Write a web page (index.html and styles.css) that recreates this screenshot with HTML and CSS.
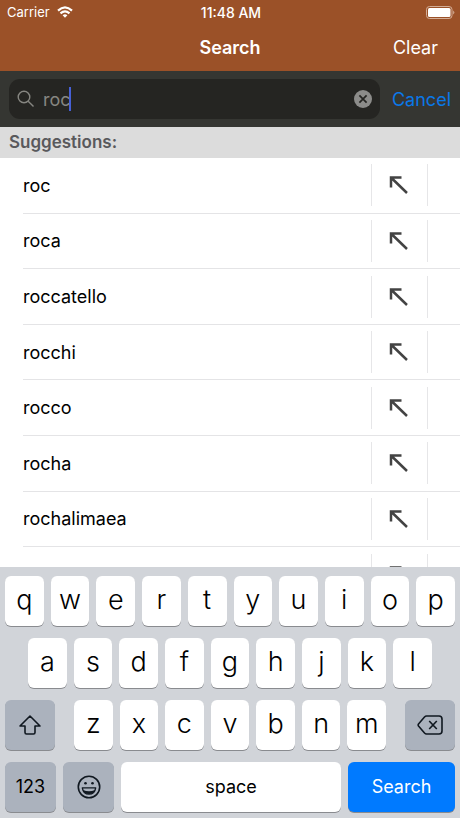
FILE: index.html
```html
<!DOCTYPE html>
<html lang="en">
<head>
<meta charset="utf-8">
<meta name="viewport" content="width=device-width, initial-scale=1">
<title>Search</title>
<link rel="stylesheet" href="styles.css">
</head>
<body>
<svg class="defs" aria-hidden="true">
  <symbol id="arrow" viewBox="0 0 20 20"><path d="M2 12.500V2.500H12.500M2.500 3L18 18" fill="none" stroke="currentColor" stroke-width="2.500"/></symbol>
</svg>
<div class="app">
  <header class="top">
    <div class="status">
      <span class="carrier">Carrier
        <svg class="wifi" viewBox="0 0 16 12" aria-hidden="true"><g fill="none" stroke="#fff" stroke-width="2.200"><path d="M1 4.600Q8 -1.800 15 4.600"/><path d="M3.500 7.400Q8 3.400 12.500 7.400"/></g><path d="M5.600 9.300Q8 7.300 10.400 9.300L8 11.700Z" fill="#fff"/></svg>
      </span>
      <time class="clock">11:48 AM</time>
      <svg class="battery" viewBox="0 0 29 13" aria-label="Battery full"><rect x=".5" y=".5" width="25.500" height="12" rx="3" fill="none" stroke="#d3ad96"/><rect x="2" y="2" width="22.500" height="9" rx="1.500" fill="#fff"/><path d="M27.200 4.500Q29.500 6.500 27.200 8.500Z" fill="#d3ad96"/></svg>
    </div>
    <nav class="nav">
      <h1 class="title">Search</h1>
      <button class="clear" type="button">Clear</button>
    </nav>
  </header>
  <form class="searchbar">
    <div class="field">
      <svg class="lens" viewBox="0 0 18 18" aria-hidden="true"><circle cx="7" cy="7" r="5.800"/><path d="M11.200 11.200L16.500 16.500"/></svg>
      <label class="query"><input class="input" type="text" value="roc" size="1" aria-label="Search"><span class="caret"></span></label>
      <button class="reset" type="button" aria-label="Clear text"><svg viewBox="0 0 18 18"><circle cx="9" cy="9" r="9" fill="#8c8c8a"/><path d="M5.400 5.400L12.600 12.600M12.600 5.400L5.400 12.600" stroke="#252522" stroke-width="1.700"/></svg></button>
    </div>
    <button class="cancel" type="button">Cancel</button>
  </form>
  <h2 class="heading">Suggestions:</h2>
  <ul class="list">
    <li class="row"><span class="word">roc</span><button class="fill" type="button" aria-label="Use roc"><svg><use href="#arrow"/></svg></button></li>
    <li class="row"><span class="word">roca</span><button class="fill" type="button" aria-label="Use roca"><svg><use href="#arrow"/></svg></button></li>
    <li class="row"><span class="word">roccatello</span><button class="fill" type="button" aria-label="Use roccatello"><svg><use href="#arrow"/></svg></button></li>
    <li class="row"><span class="word">rocchi</span><button class="fill" type="button" aria-label="Use rocchi"><svg><use href="#arrow"/></svg></button></li>
    <li class="row"><span class="word">rocco</span><button class="fill" type="button" aria-label="Use rocco"><svg><use href="#arrow"/></svg></button></li>
    <li class="row"><span class="word">rocha</span><button class="fill" type="button" aria-label="Use rocha"><svg><use href="#arrow"/></svg></button></li>
    <li class="row"><span class="word">rochalimaea</span><button class="fill" type="button" aria-label="Use rochalimaea"><svg><use href="#arrow"/></svg></button></li>
    <li class="row"><span class="word"></span><button class="fill" type="button" aria-label="Use suggestion"><svg><use href="#arrow"/></svg></button></li>
  </ul>
  <section class="keyboard" aria-label="Keyboard">
    <div class="keys">
      <button class="key">q</button><button class="key">w</button><button class="key">e</button><button class="key">r</button><button class="key">t</button><button class="key">y</button><button class="key">u</button><button class="key">i</button><button class="key">o</button><button class="key">p</button>
    </div>
    <div class="keys middle">
      <button class="key">a</button><button class="key">s</button><button class="key">d</button><button class="key">f</button><button class="key">g</button><button class="key">h</button><button class="key">j</button><button class="key">k</button><button class="key">l</button>
    </div>
    <div class="keys lower">
      <button class="key dark" aria-label="Shift"><svg class="shift" viewBox="0 0 24 22"><path d="M12 2L22 12H17V18.500Q17 20 15.500 20H8.500Q7 20 7 18.500V12H2Z"/></svg></button>
      <div class="keys letters">
        <button class="key">z</button><button class="key">x</button><button class="key">c</button><button class="key">v</button><button class="key">b</button><button class="key">n</button><button class="key">m</button>
      </div>
      <button class="key dark" aria-label="Delete"><svg class="delete" viewBox="0 0 26 20"><path d="M9.500 1H22Q25 1 25 4V16Q25 19 22 19H9.500Q8.500 19 7.500 18L1.500 11Q.8 10 1.500 9L7.500 2Q8.500 1 9.500 1ZM12.200 6L19.800 14M19.800 6L12.200 14"/></svg></button>
    </div>
    <div class="keys bottom">
      <button class="key dark label">123</button>
      <button class="key dark" aria-label="Emoji"><svg class="emoji" viewBox="0 0 24 24"><circle cx="12" cy="12" r="10.700"/><path d="M5.300 12.800H18.700Q17.700 19.200 12 19.200T5.300 12.800Z" stroke-width="1.300"/><path d="M6 15Q12 17.600 18 15Q16.500 19 12 19T6 15Z" fill="#101820" stroke="none"/><circle cx="8.500" cy="8.300" r="1.300" fill="#101820" stroke="none"/><circle cx="15.500" cy="8.300" r="1.300" fill="#101820" stroke="none"/></svg></button>
      <button class="key label">space</button>
      <button class="key label go">Search</button>
    </div>
  </section>
</div>
</body>
</html>
```
FILE: styles.css
```css
* { box-sizing: border-box; }

body {
  margin: 0;
  background: #fff;
  color: #000;
  font-family: Inter, "Liberation Sans", sans-serif;
  font-size: 18px;
}

h1, h2, ul { margin: 0; padding: 0; }

button {
  padding: 0;
  border: 0;
  background: none;
  color: inherit;
  font: inherit;
}

.defs { display: none; }

.app {
  display: flex;
  flex-direction: column;
  height: 100vh;
}

/* Status and navigation */
.top {
  background: #9b5128;
  color: #fff;
}

.status {
  display: grid;
  grid-template-columns: 1fr auto 1fr;
  align-items: center;
  height: 24px;
  padding: 0 5px 0 7px;
  font-size: 13px;
}

.carrier {
  display: flex;
  align-items: center;
  gap: 7px;
}

.wifi { width: 16px; height: 12px; }

.clock {
  font-size: 14px;
  font-weight: 500;
}

.battery {
  width: 29px;
  height: 13px;
  justify-self: end;
}

.nav {
  display: grid;
  grid-template-columns: 1fr auto 1fr;
  align-items: center;
  height: 47px;
  padding: 0 22px;
}

.title {
  grid-column: 2;
  font-size: 18px;
  font-weight: 600;
}

.clear { justify-self: end; }

/* Search field */
.searchbar {
  display: flex;
  align-items: center;
  gap: 12px;
  height: 56px;
  padding: 0 9px;
  background: #353632;
}

.field {
  display: flex;
  flex: 1;
  align-items: center;
  gap: 8px;
  height: 40px;
  padding: 0 8px;
  border-radius: 11px;
  background: #252522;
}

.lens {
  width: 18px;
  height: 18px;
  fill: none;
  stroke: #868681;
  stroke-width: 1.4;
}

.query {
  display: flex;
  flex: 1;
  align-items: center;
}

.input {
  width: 26px;
  padding: 0;
  border: 0;
  outline: 0;
  background: none;
  color: #868681;
  font: inherit;
}

.caret {
  width: 2px;
  height: 24px;
  background: #4660d6;
}

.reset, .reset svg {
  display: block;
  width: 18px;
  height: 18px;
}

.cancel { color: #0a78e8; }

/* Suggestions */
.heading {
  height: 31px;
  padding: 0 9px;
  background: #dcdcdc;
  color: #59595c;
  font-size: 17px;
  font-weight: 600;
  line-height: 31px;
}

.list {
  flex: 1;
  min-height: 0;
  overflow: hidden;
  list-style: none;
}

.row {
  display: flex;
  align-items: center;
  height: 13.6%;
  margin-left: 23px;
  padding-right: 32px;
  border-bottom: 1px solid #e4e4e6;
}

.word { flex: 1; }

.fill {
  display: flex;
  align-items: center;
  justify-content: center;
  width: 57px;
  height: 42px;
  padding-right: 2px;
  border: solid #e6e6e8;
  border-width: 0 1px;
  color: #434343;
}

.fill svg { width: 20px; height: 20px; }

/* Keyboard */
.keyboard {
  display: flex;
  flex-direction: column;
  gap: 12px;
  padding: 9px 5px 6px;
  background: #d1d4d9;
}

.keys {
  display: grid;
  grid-auto-columns: minmax(0, 1fr);
  grid-auto-flow: column;
  gap: 7px;
}

.middle { padding: 0 23px; }

.lower {
  grid-template-columns: 50px 1fr 50px;
  gap: 19px;
}

.letters { gap: 7px; }

.bottom { grid-template-columns: 51px 51px 1fr 107px; }

.key {
  display: flex;
  align-items: center;
  justify-content: center;
  height: 50px;
  padding-bottom: 4px;
  border-radius: 6px;
  background: #fff;
  box-shadow: 0 1px 0 #898b8f;
  font-size: 27px;
  font-weight: 300;
}

.dark {
  padding-bottom: 0;
  background: #abb2bd;
}

.label {
  padding-bottom: 2px;
  font-size: 18px;
  font-weight: 400;
}

.go {
  background: #007aff;
  color: #fff;
}

.key svg {
  fill: none;
  stroke: #101820;
  stroke-width: 1.6;
  stroke-linejoin: round;
}

.shift { width: 24px; height: 22px; }
.delete { width: 26px; height: 20px; }
.emoji { width: 24px; height: 24px; }
```
